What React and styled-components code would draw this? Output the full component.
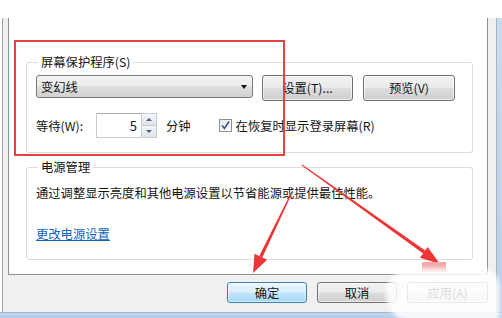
import React from "react";
import styled, { createGlobalStyle } from "styled-components";

const Global = createGlobalStyle`
  html, body { margin: 0; padding: 0; background: #fff; }
  * { box-sizing: border-box; }
`;

const FONT = `"Noto Sans CJK SC", "Noto Sans", sans-serif`;

const Window = styled.div`
  position: relative;
  width: 502px;
  height: 318px;
  overflow: hidden;
  background: #fff;
  display: flex;
  flex-direction: column;
  font-family: ${FONT};
  font-size: 12.3px;
  line-height: 16px;
  color: #141414;
`;

const TopStrip = styled.div`
  height: 18px;
  flex: none;
`;

const Main = styled.div`
  flex: 1;
  display: flex;
  min-height: 0;
`;

const Frame = styled.div`
  flex: 1;
  margin-left: 2px;
  border-left: 1px solid #a3a3a3;
  border-right: 1px solid #a9b2bd;
  background: #f0f0f0;
  padding: 0 8px 0 5px;
  display: flex;
  flex-direction: column;
`;

const RightBlue = styled.div`
  width: 5px;
  flex: none;
  background: linear-gradient(#c8dcf1, #b7cfe9);
`;

const BottomBlue = styled.div`
  height: 6px;
  flex: none;
  border-top: 1px solid #9fb8d6;
  background: linear-gradient(#c2d8ef, #b3cbe6);
`;

const TabPage = styled.div`
  height: 257px;
  flex: none;
  background: #fff;
  border: 1px solid #8e9198;
  border-top: none;
  padding: 0 14px 0 17px;
  display: flex;
  flex-direction: column;
`;

const Group = styled.fieldset`
  margin: ${(p) => p.$top}px 0 0 0;
  border: 1px solid #dcdcdc;
  border-radius: 3px;
  padding: ${(p) => p.$pad};
  min-width: 0;
`;

const Legend = styled.legend`
  padding: 0 3px;
  margin-left: 2px;
  line-height: 14px;
  font-size: 12.3px;
  color: #141414;
`;

const Row = styled.div`
  display: flex;
  align-items: ${(p) => p.$align || "center"};
  margin-top: ${(p) => p.$mt || 0}px;
  height: ${(p) => p.$h}px;
`;

const Combo = styled.div`
  width: 217px;
  height: 23px;
  border: 1px solid #7a7a7a;
  border-radius: 3px;
  background: linear-gradient(#f3f3f3 0%, #ececec 48%, #dedede 52%, #d2d2d2 100%);
  display: flex;
  align-items: center;
  justify-content: space-between;
  padding: 0 5px 0 4px;
`;

const ComboArrow = styled.span`
  width: 0;
  height: 0;
  border-left: 3.5px solid transparent;
  border-right: 3.5px solid transparent;
  border-top: 4px solid #111;
`;

const Button = styled.div`
  width: ${(p) => p.$w}px;
  height: ${(p) => p.$h}px;
  margin-left: ${(p) => p.$ml || 0}px;
  flex: none;
  border: 1px solid ${(p) => (p.$default ? "#3c7fb1" : "#707070")};
  border-radius: 3px;
  background: ${(p) =>
    p.$default
      ? "linear-gradient(#eaf6fd 0%, #d9f0fc 48%, #bee6fd 52%, #a7d9f5 100%)"
      : "linear-gradient(#f2f2f2 0%, #ebebeb 48%, #dddddd 52%, #cfcfcf 100%)"};
  box-shadow: inset 0 0 0 1px ${(p) => (p.$default ? "rgba(255,255,255,0.5)" : "rgba(255,255,255,0.6)")};
  display: flex;
  align-items: center;
  justify-content: center;
  color: #141414;
`;

const Label = styled.span`
  width: ${(p) => (p.$w ? `${p.$w}px` : "auto")};
  margin-left: ${(p) => p.$ml || 0}px;
  flex: none;
  white-space: nowrap;
`;

const Spin = styled.div`
  display: flex;
  height: 25px;
  flex: none;
`;

const SpinBox = styled.div`
  width: 45px;
  height: 100%;
  border: 1px solid #c8ccd4;
  border-top-color: #abadb3;
  border-right: none;
  background: #fff;
  display: flex;
  align-items: center;
  justify-content: flex-end;
  padding-right: 4px;
  font-size: 13px;
`;

const SpinButtons = styled.div`
  width: 16px;
  height: 100%;
  display: flex;
  flex-direction: column;
  border: 1px solid #c8ccd4;
`;

const SpinBtn = styled.div`
  flex: 1;
  display: flex;
  align-items: center;
  justify-content: center;
  background: linear-gradient(#f4f6f9, #dfe4ea);
  border-top: ${(p) => (p.$dir === "down" ? "1px solid #c8ccd4" : "none")};
`;

const SpinArrow = styled.span`
  width: 0;
  height: 0;
  border-left: 3px solid transparent;
  border-right: 3px solid transparent;
  ${(p) =>
    p.$dir === "up"
      ? "border-bottom: 3px solid #4d6185;"
      : "border-top: 3px solid #4d6185;"}
`;

const Check = styled.span`
  width: 13px;
  height: 13px;
  flex: none;
  margin-left: ${(p) => p.$ml}px;
  border: 1px solid #8e8f8f;
  background: linear-gradient(135deg, #e6e6e6, #ffffff);
  display: flex;
  align-items: center;
  justify-content: center;
`;

const Text = styled.div`
  margin-top: ${(p) => p.$mt || 0}px;
  white-space: nowrap;
`;

const Link = styled.a`
  display: block;
  margin-top: ${(p) => p.$mt || 0}px;
  color: #0d63c1;
  text-decoration: underline;
  white-space: nowrap;
  width: max-content;
`;

const ButtonBar = styled.div`
  flex: 1;
  display: flex;
  justify-content: flex-end;
  align-items: flex-start;
  gap: 10px;
  padding-top: 7px;
`;

const RedBox = styled.div`
  position: absolute;
  left: 14px;
  top: 40px;
  width: 271px;
  height: 116px;
  border: 2px solid #e8403f;
  pointer-events: none;
`;

const ArrowLayer = styled.svg`
  position: absolute;
  left: 0;
  top: 0;
  pointer-events: none;
`;

const Blob = styled.div`
  position: absolute;
  left: 386px;
  top: 268px;
  width: 114px;
  height: 56px;
  border-radius: 26px 20px 10px 30px;
  background: rgba(255, 255, 255, 0.84);
  filter: blur(2px);
  pointer-events: none;
`;

const Patch = styled.div`
  position: absolute;
  left: 422px;
  top: 262px;
  width: 24px;
  height: 10px;
  background: #f4a7a7;
  pointer-events: none;
`;

export default function App() {
  return (
    <>
      <Global />
      <Window>
        <TopStrip />
        <Main>
          <Frame>
            <TabPage>
              <Group $top={37} $pad="6px 16px 14px 9px">
                <Legend>屏幕保护程序(S)</Legend>
                <Row $h={26} $align="flex-start">
                  <Combo>
                    <span>变幻线</span>
                    <ComboArrow />
                  </Combo>
                  <Button $w={91} $h={26} $ml={9}>设置(T)...</Button>
                  <Button $w={92} $h={26} $ml={10}>预览(V)</Button>
                </Row>
                <Row $h={25} $mt={12}>
                  <Label $w={60}>等待(W):</Label>
                  <Spin>
                    <SpinBox>5</SpinBox>
                    <SpinButtons>
                      <SpinBtn $dir="up"><SpinArrow $dir="up" /></SpinBtn>
                      <SpinBtn $dir="down"><SpinArrow $dir="down" /></SpinBtn>
                    </SpinButtons>
                  </Spin>
                  <Label $ml={9}>分钟</Label>
                  <Check $ml={28}>
                    <svg width="11" height="11" viewBox="0 0 11 11">
                      <path d="M2 5.5 L4.5 8.5 L9 1.5" fill="none" stroke="#3d5285" strokeWidth="1.6" />
                    </svg>
                  </Check>
                  <Label $ml={4}>在恢复时显示登录屏幕(R)</Label>
                </Row>
              </Group>
              <Group $top={7} $pad="11px 16px 17px 9px">
                <Legend>电源管理</Legend>
                <Text>通过调整显示亮度和其他电源设置以节省能源或提供最佳性能。</Text>
                <Link $mt={25}>更改电源设置</Link>
              </Group>
            </TabPage>
            <ButtonBar>
              <Button $w={80} $h={21} $default>确定</Button>
              <Button $w={80} $h={21}>取消</Button>
              <Button $w={81} $h={21}>应用(A)</Button>
            </ButtonBar>
          </Frame>
          <RightBlue />
        </Main>
        <BottomBlue />
        <RedBox />
        <ArrowLayer width="502" height="318" viewBox="0 0 502 318">
          <g fill="#ee3535">
            <polygon points="292.5,192.3 291.5,191.7 259.2,256.0 262.4,257.6" />
            <polygon points="253,273 254.5,253.8 267.1,259.8" />
            <polygon points="301.7,165.5 302.3,164.5 425.2,250.6 423.2,253.4" />
            <polygon points="440,264 420,257.7 427.6,247.1" />
          </g>
        </ArrowLayer>
        <Patch />
        <Blob />
      </Window>
    </>
  );
}
